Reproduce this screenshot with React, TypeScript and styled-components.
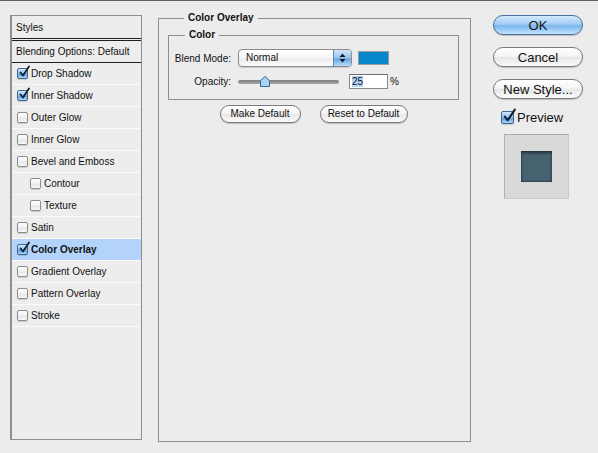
import React from 'react';
import styled, { createGlobalStyle } from "styled-components";

const GlobalStyle = createGlobalStyle`
  html, body {
    margin: 0;
    padding: 0;
    background: #ececec;
  }
  body {
    font-family: "Liberation Sans", Arial, sans-serif;
    font-size: 10px;
    color: #111;
  }
`;

const Dialog = styled.div`
  display: flex;
  align-items: flex-start;
  height: 452px;
  border-top: 1px solid #5e5e5e;
  background: #ececec;
`;

const StylesPanel = styled.div`
  margin: 14px 0 0 10px;
  width: 132px;
  height: 425px;
  box-sizing: border-box;
  border: 1px solid #8e8e8e;
  border-left: 2px solid #8e8e8e;
  background: #ededed;
  display: flex;
  flex-direction: column;
`;

const PanelHeader = styled.div`
  height: 22px;
  display: flex;
  align-items: center;
  padding-left: 4px;
  border-bottom: 3px double #1e1e1e;
`;

const BlendingRow = styled.div`
  height: 21px;
  display: flex;
  align-items: center;
  padding-left: 4px;
  border-bottom: 1px solid #1e1e1e;
`;

const StyleRow = styled.div<{ $indent?: boolean; $selected?: boolean }>`
  height: 21px;
  display: flex;
  align-items: center;
  gap: 3px;
  padding-left: ${p => (p.$indent ? 18 : 5)}px;
  border-bottom: 1px solid #fbfbfb;
  background: ${p => (p.$selected ? "#b4d3fb" : "transparent")};
  font-weight: ${p => (p.$selected ? "bold" : "normal")};
`;

const Box = styled.span<{ $checked?: boolean; $size?: number }>`
  display: inline-flex;
  align-items: center;
  justify-content: center;
  width: ${p => p.$size ?? 11}px;
  height: ${p => p.$size ?? 11}px;
  box-sizing: border-box;
  border-radius: 2px;
  border: 1px solid ${p => (p.$checked ? "#3f6690" : "#8c8c8c")};
  background: ${p =>
    p.$checked
      ? "linear-gradient(#d6e9fc, #8dbdee 50%, #5d9ce0 55%, #a9d3fb)"
      : "linear-gradient(#ffffff, #f0f0f0 50%, #e4e4e4 55%, #fafafa)"};
  box-shadow: 0 1px 1px rgba(0, 0, 0, 0.15);
  position: relative;
  flex: none;
`;

const Check = styled.svg`
  position: absolute;
  left: 1px;
  top: -3px;
  overflow: visible;
`;

function CheckBox({ checked, size }: { checked?: boolean; size?: number }) {
  const s = size ?? 11;
  return (
    <Box $checked={checked} $size={s}>
      {checked && (
        <Check width={s} height={s} viewBox="0 0 11 11">
          <path d="M1.5 6.5 L4 9.5 L10 0.5" fill="none" stroke="#10202f" strokeWidth="1.8" strokeLinejoin="round" strokeLinecap="round" />
        </Check>
      )}
    </Box>
  );
}

const OuterGroup = styled.fieldset`
  margin: 11px 0 0 16px;
  padding: 0 11px 0 9px;
  width: 313px;
  height: 430px;
  box-sizing: border-box;
  border: 1px solid #8e8e8e;
  min-width: 0;
`;

const Legend = styled.legend`
  font-weight: bold;
  font-size: 10px;
  line-height: 12px;
  padding: 0 4px;
  margin-left: 16px;
`;

const InnerGroup = styled.fieldset`
  margin: 5px 0 0 0;
  padding: 0;
  height: 71px;
  box-sizing: border-box;
  border: 1px solid #8e8e8e;
  min-width: 0;
`;

const FieldGrid = styled.div`
  display: grid;
  grid-template-columns: 62px auto;
  column-gap: 7px;
  row-gap: 7px;
  align-items: center;
  margin-top: 8px;
`;

const FieldLabel = styled.div`
  text-align: right;
`;

const FieldLine = styled.div<{ $gap?: number }>`
  display: flex;
  align-items: center;
  gap: ${p => p.$gap ?? 6}px;
`;

const Select = styled.div`
  width: 114px;
  height: 18px;
  box-sizing: border-box;
  border: 1px solid #8a8a8a;
  border-radius: 4px;
  display: flex;
  overflow: hidden;
  background: linear-gradient(#ffffff, #f6f6f6 50%, #ebebeb 55%, #fbfbfb);
  box-shadow: 0 1px 1px rgba(0, 0, 0, 0.15);
`;

const SelectText = styled.div`
  flex: 1;
  padding-left: 7px;
  line-height: 16px;
`;

const SelectArrows = styled.div`
  width: 17px;
  border-left: 1px solid #5f86b4;
  background: linear-gradient(#d2e7fc, #92c3f1 50%, #66a6e6 55%, #b5dcfd);
  display: flex;
  align-items: center;
  justify-content: center;
`;

const Swatch = styled.div`
  width: 31px;
  height: 14px;
  box-sizing: border-box;
  border: 1px solid #9a9a9a;
  background: #0987cc;
`;

const Slider = styled.div`
  position: relative;
  width: 101px;
  height: 4px;
  border-radius: 2px;
  background: linear-gradient(#7d7d7d, #a8a8a8);
  margin-right: 10px;
`;

const Thumb = styled.svg`
  position: absolute;
  left: 22px;
  top: -4px;
`;

const NumberBox = styled.div`
  width: 39px;
  height: 15px;
  box-sizing: border-box;
  border: 1px solid #8a8a8a;
  border-top-color: #6e6e6e;
  background: #fff;
  padding: 1px 2px;
  line-height: 11px;
`;

const Selected = styled.span`
  background: #b5d5ff;
`;

const Percent = styled.span`
  margin-left: 2px;
`;

const ButtonRow = styled.div`
  display: flex;
  justify-content: center;
  gap: 19px;
  margin-top: 5px;
`;

const Pill = styled.button<{ $width: number; $height?: number; $primary?: boolean; $big?: boolean }>`
  width: ${p => p.$width}px;
  height: ${p => p.$height ?? 18}px;
  padding: 0;
  border-radius: 10px;
  border: 1px solid ${p => (p.$primary ? "#4b6f9c" : "#7a7a7a")};
  background: ${p =>
    p.$primary
      ? "linear-gradient(#d3e9fd, #a3cdf4 45%, #7ab5ec 55%, #c4e4ff)"
      : "linear-gradient(#ffffff, #f5f5f5 45%, #e7e7e7 55%, #fbfbfb)"};
  box-shadow: 0 1px 1px rgba(0, 0, 0, 0.2);
  font-family: "Liberation Sans", Arial, sans-serif;
  font-size: ${p => (p.$big ? 13 : 10)}px;
  color: #111;
  box-sizing: border-box;
  line-height: 1;
`;

const SideColumn = styled.div`
  margin: 14px 0 0 22px;
  width: 90px;
  display: flex;
  flex-direction: column;
  gap: 12px;
`;

const PreviewRow = styled.div`
  display: flex;
  align-items: center;
  gap: 3px;
  margin: -1px 0 0 8px;
  font-size: 13px;
`;

const PreviewBox = styled.div`
  margin: -3px 0 0 11px;
  width: 65px;
  height: 65px;
  box-sizing: border-box;
  border: 1px solid #c9c9c9;
  border-top-color: #a9a9a9;
  border-left-color: #b2b2b2;
  background: #d9d9d9;
  display: flex;
  align-items: center;
  justify-content: center;
`;

const PreviewSwatch = styled.div`
  width: 31px;
  height: 31px;
  background: #466270;
  box-shadow: inset 0 2px 3px rgba(0, 0, 0, 0.5), inset 0 -1px 2px rgba(0, 0, 0, 0.3);
`;

const styleItems = [
  { name: "Drop Shadow", checked: true },
  { name: "Inner Shadow", checked: true },
  { name: "Outer Glow" },
  { name: "Inner Glow" },
  { name: "Bevel and Emboss" },
  { name: "Contour", indent: true },
  { name: "Texture", indent: true },
  { name: "Satin" },
  { name: "Color Overlay", checked: true, selected: true },
  { name: "Gradient Overlay" },
  { name: "Pattern Overlay" },
  { name: "Stroke" },
];

export default function App() {
  return (
    <>
      <GlobalStyle />
      <Dialog>
        <StylesPanel>
          <PanelHeader>Styles</PanelHeader>
          <BlendingRow>Blending Options: Default</BlendingRow>
          {styleItems.map(item => (
            <StyleRow key={item.name} $indent={item.indent} $selected={item.selected}>
              <CheckBox checked={item.checked} />
              {item.name}
            </StyleRow>
          ))}
        </StylesPanel>

        <OuterGroup>
          <Legend>Color Overlay</Legend>
          <InnerGroup>
            <Legend>Color</Legend>
            <FieldGrid>
              <FieldLabel>Blend Mode:</FieldLabel>
              <FieldLine>
                <Select>
                  <SelectText>Normal</SelectText>
                  <SelectArrows>
                    <svg width="7" height="10" viewBox="0 0 7 10">
                      <path d="M3.5 0.5 L6.5 4 L0.5 4 Z M3.5 9.5 L6.5 6 L0.5 6 Z" fill="#1a1a1a" />
                    </svg>
                  </SelectArrows>
                </Select>
                <Swatch />
              </FieldLine>
              <FieldLabel>Opacity:</FieldLabel>
              <FieldLine $gap={0}>
                <Slider>
                  <Thumb width="10" height="11" viewBox="0 0 10 11">
                    <path d="M5 0.5 L9.5 4.5 L9.5 10.5 L0.5 10.5 L0.5 4.5 Z" fill="#a9d2f7" stroke="#3b6591" strokeWidth="1" />
                  </Thumb>
                </Slider>
                <NumberBox>
                  <Selected>25</Selected>
                </NumberBox>
                <Percent>%</Percent>
              </FieldLine>
            </FieldGrid>
          </InnerGroup>
          <ButtonRow>
            <Pill $width={81}>Make Default</Pill>
            <Pill $width={88}>Reset to Default</Pill>
          </ButtonRow>
        </OuterGroup>

        <SideColumn>
          <Pill $width={90} $height={20} $primary $big>OK</Pill>
          <Pill $width={90} $height={20} $big>Cancel</Pill>
          <Pill $width={90} $height={20} $big>New Style...</Pill>
          <PreviewRow>
            <CheckBox checked size={13} />
            Preview
          </PreviewRow>
          <PreviewBox>
            <PreviewSwatch />
          </PreviewBox>
        </SideColumn>
      </Dialog>
    </>
  );
}
